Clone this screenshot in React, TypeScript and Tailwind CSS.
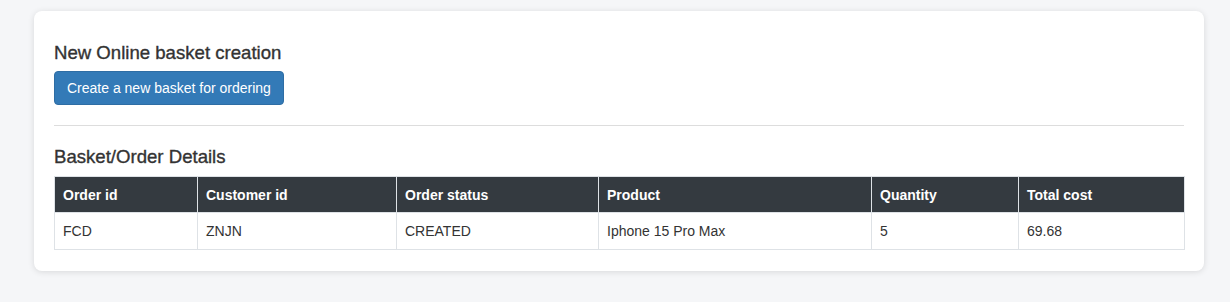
import React from "react";

const cols = [143, 199, 202, 273, 147, 166];
const headers = ["Order id", "Customer id", "Order status", "Product", "Quantity", "Total cost"];
const row = ["FCD", "ZNJN", "CREATED", "Iphone 15 Pro Max", "5", "69.68"];

export default function App() {
  return (
    <div
      className="min-h-[302px] w-full bg-[#f5f6f8] pt-[11px] pl-[34px] pr-[26px] pb-[32px] text-[#333333]"
      style={{ fontFamily: '"Liberation Sans", Arial, Helvetica, sans-serif' }}
    >
      <div className="rounded-[8px] bg-white px-[20px] pt-[32px] pb-[21px] shadow-[0_1px_6px_rgba(0,0,0,0.12)]">
        <h4 className="text-[18.6px] leading-[20px] font-medium text-[#333333] [-webkit-text-stroke:0.35px_#333333]">
          New Online basket creation
        </h4>
        <button className="mt-[8px] h-[34px] rounded-[4px] border border-[#2e6da4] bg-[#337ab7] px-[12px] text-[14px] leading-[20px] text-white">
          Create a new basket for ordering
        </button>
        <div className="mt-[20px] h-px bg-[#dddddd]" />
        <h4 className="mt-[21px] text-[18.6px] leading-[20px] font-medium text-[#333333] [-webkit-text-stroke:0.35px_#333333]">
          Basket/Order Details
        </h4>
        <table className="mt-[9px] w-full table-fixed border-collapse text-[14px] leading-[20px]">
          <colgroup>
            {cols.map((w, i) => (
              <col key={i} style={{ width: w }} />
            ))}
          </colgroup>
          <thead>
            <tr className="h-[36px] bg-[#343a40]">
              {headers.map((h) => (
                <th key={h} className="border border-[#dee2e6] px-[8px] text-left font-bold text-white">
                  {h}
                </th>
              ))}
            </tr>
          </thead>
          <tbody>
            <tr className="h-[37px]">
              {row.map((c, i) => (
                <td key={i} className="border border-[#dee2e6] px-[8px] text-left text-[#333333]">
                  {c}
                </td>
              ))}
            </tr>
          </tbody>
        </table>
      </div>
    </div>
  );
}
